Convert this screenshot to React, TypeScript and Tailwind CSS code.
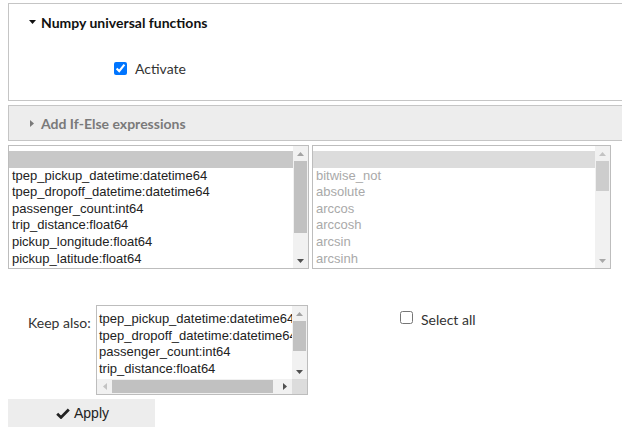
import React from "react";

const columns = [
  "tpep_pickup_datetime:datetime64",
  "tpep_dropoff_datetime:datetime64",
  "passenger_count:int64",
  "trip_distance:float64",
  "pickup_longitude:float64",
  "pickup_latitude:float64",
];

const ufuncs = ["bitwise_not", "absolute", "arccos", "arccosh", "arcsin", "arcsinh"];

const listFont = { fontFamily: '"Liberation Sans", Arial, sans-serif' };
const uiFont = { fontFamily: 'Lato, "Open Sans", sans-serif' };

// little triangle used by scrollbar buttons
const Arrow: React.FC<{ dir: "up" | "down" | "left" | "right"; color?: string }> = ({ dir, color = "#a3a3a3" }) => {
  const pts = {
    up: "0,4 7,4 3.5,0",
    down: "0,0 7,0 3.5,4",
    left: "4,0 4,7 0,3.5",
    right: "0,0 0,7 4,3.5",
  }[dir];
  const vertical = dir === "up" || dir === "down";
  return (
    <svg width={vertical ? 7 : 4} height={vertical ? 4 : 7} viewBox={vertical ? "0 0 7 4" : "0 0 4 7"}>
      <polygon points={pts} fill={color} />
    </svg>
  );
};

const VScroll: React.FC<{ thumbClass: string; light?: boolean }> = ({ thumbClass, light }) => (
  <div className="w-[15px] h-full shrink-0 flex flex-col bg-[#f1f1f1]">
    <div className="h-[15px] flex items-center justify-center">
      <Arrow dir="up" color={light ? "#c3c3c3" : "#a3a3a3"} />
    </div>
    <div className="flex-1">
      <div className={`${thumbClass} mx-[1px] ${light ? "bg-[#cdcdcd]" : "bg-[#c1c1c1]"}`} />
    </div>
    <div className="h-[15px] flex items-center justify-center">
      <Arrow dir="down" color={light ? "#a8a8a8" : "#505050"} />
    </div>
  </div>
);

const ListBox: React.FC<{ items: string[]; disabled?: boolean; thumbClass: string }> = ({ items, disabled, thumbClass }) => (
  <div className="h-[124px] flex border border-[#bdbdbd]">
    <div
      className={`flex-1 overflow-hidden pt-[5px] text-[13px] ${disabled ? "text-[#a9a9a9]" : "text-[#222]"}`}
      style={listFont}
    >
      <div className={`h-[16.6px] ${disabled ? "bg-[#dcdcdc]" : "bg-[#c8c8c8]"}`} />
      {items.map((it) => (
        <div key={it} className="h-[16.6px] leading-[16.6px] px-[3px] whitespace-nowrap">
          {it}
        </div>
      ))}
    </div>
    <VScroll thumbClass={thumbClass} light={disabled} />
  </div>
);

export default function App() {
  return (
    <div className="overflow-hidden bg-white pl-2 pt-[3px] w-[622px] h-[439px]" style={uiFont}>
      {/* Numpy panel */}
      <div className="-mr-4 h-[98px] border border-[#c5c5c5]">
        <div className="flex items-center h-[36px] pl-[20px] font-bold text-[14px] text-[#111]">
          <span className="mr-[5px] flex">
            <svg width="7" height="4" viewBox="0 0 7 4">
              <polygon points="0,0 7,0 3.5,4" fill="#111" />
            </svg>
          </span>
          Numpy universal functions
        </div>
        <label className="flex items-center mt-[18px] pl-[105px] text-[14px] text-[#333]">
          <input type="checkbox" defaultChecked className="w-[13px] h-[13px] m-0 mr-[8px]" />
          Activate
        </label>
      </div>

      {/* If-else panel */}
      <div className="-mr-4 mt-[4px] h-[36px] flex items-center pl-[21px] border border-[#c5c5c5] bg-[#ededed] font-bold text-[14px] text-[#7a7a7a]">
        <span className="mr-[7px] flex">
          <svg width="4" height="7" viewBox="0 0 4 7">
            <polygon points="0,0 0,7 4,3.5" fill="#7a7a7a" />
          </svg>
        </span>
        Add If-Else expressions
      </div>

      {/* Lists */}
      <div className="mt-[4px] flex gap-[3px] w-[603px]">
        <div className="w-[301px]">
          <ListBox items={columns} thumbClass="mt-[0px] h-[72px]" />
        </div>
        <div className="w-[299px]">
          <ListBox items={ufuncs} disabled thumbClass="mt-[0px] h-[30px]" />
        </div>
      </div>

      {/* Keep also */}
      <div className="mt-[36px] flex">
        <div className="w-[88px] pl-[20px] pt-[7px] text-[14px] text-[#333]">Keep also:</div>
        <div className="w-[212px] h-[90px] flex flex-col border border-[#bdbdbd]">
          <div className="flex-1 flex min-h-0">
            <div className="flex-1 overflow-hidden text-[13px] text-[#222] pt-[5px]" style={listFont}>
              {columns.slice(0, 4).map((c) => (
                <div key={c} className="h-[16.5px] leading-[16.5px] px-[2px] whitespace-nowrap">
                  {c}
                </div>
              ))}
            </div>
            <VScroll thumbClass="mt-0 h-[30px]" />
          </div>
          <div className="h-[15px] flex bg-[#f1f1f1]">
            <div className="w-[15px] flex items-center justify-center">
              <Arrow dir="left" color="#c3c3c3" />
            </div>
            <div className="flex-1 flex items-center">
              <div className="h-[13px] w-[161px] bg-[#c1c1c1]" />
            </div>
            <div className="w-[15px] flex items-center justify-center">
              <Arrow dir="right" color="#505050" />
            </div>
            <div className="w-[15px] bg-[#dcdcdc]" />
          </div>
        </div>
        <label className="ml-[92px] mt-[6px] flex items-start h-[20px] text-[14px] text-[#333]">
          <input type="checkbox" className="w-[13px] h-[13px] m-0 mt-[0px] mr-[8px]" />
          <span className="-mt-[2px]">Select all</span>
        </label>
      </div>

      {/* Apply */}
      <button
        className="mt-[4px] w-[147px] h-[28px] bg-[#ededed] flex items-center justify-center gap-[4px] text-[14px] text-[#222]"
        style={listFont}
      >
        <svg width="14" height="11" viewBox="0 0 14 11" className="ml-[2px]">
          <path d="M1.2 5.8 L5 9.4 L12.8 1.4" fill="none" stroke="#222" strokeWidth="2.8" />
        </svg>
        Apply
      </button>
    </div>
  );
}
